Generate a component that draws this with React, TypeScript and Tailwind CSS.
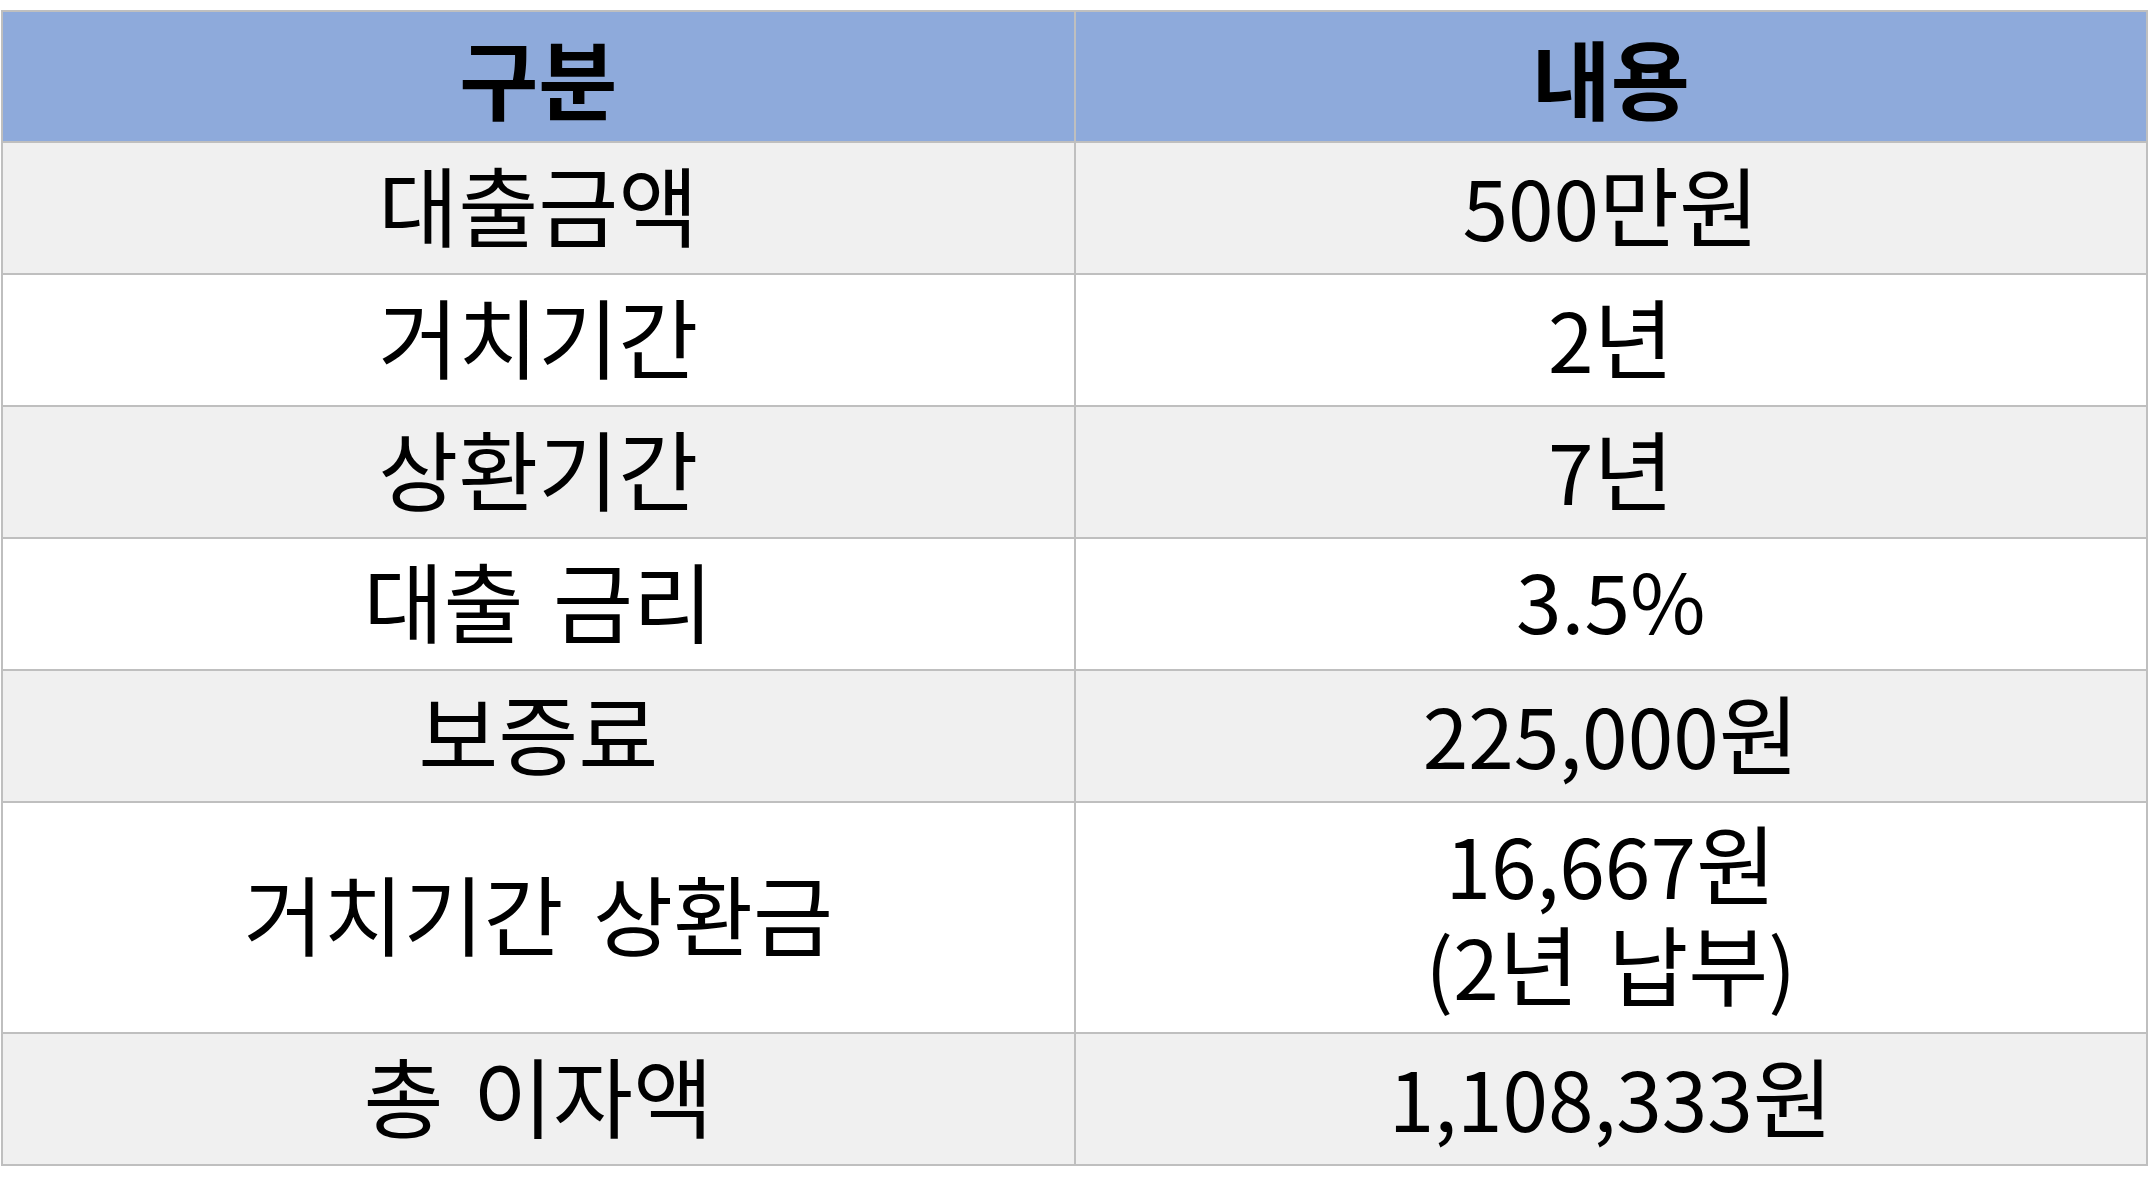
import React from "react";

const K = ({ children }: { children: React.ReactNode }) => (
  <span className="text-[87px]">{children}</span>
);

const rows: { k: string; v: React.ReactNode; tall?: boolean }[] = [
  { k: "대출금액", v: <>500<K>만원</K></> },
  { k: "거치기간", v: <>2<K>년</K></> },
  { k: "상환기간", v: <>7<K>년</K></> },
  { k: "대출 금리", v: "3.5%" },
  { k: "보증료", v: <>225,000<K>원</K></> },
  {
    k: "거치기간 상환금",
    v: (
      <>
        <div className="leading-[99px]">16,667<K>원</K></div>
        <div className="leading-[99px]">(2<K>년 납부</K>)</div>
      </>
    ),
    tall: true,
  },
  { k: "총 이자액", v: <>1,108,333<K>원</K></> },
];

export default function App() {
  return (
    <div
      className="w-[2150px] h-[1199px] bg-white pt-[10px] pl-[1px]"
      style={{ fontFamily: '"Noto Sans CJK KR", "Noto Sans", sans-serif' }}
    >
      <table className="w-[2147px] border-collapse table-fixed text-black text-[82px] leading-[1.2] [word-spacing:0.12em]">
        <thead>
          <tr className="h-[131px] bg-[#8eaadb]">
            <th className="border-2 border-[#bfbfbf] font-bold text-center align-middle text-[86px]">구분</th>
            <th className="border-2 border-[#bfbfbf] font-bold text-center align-middle text-[86px]">내용</th>
          </tr>
        </thead>
        <tbody>
          {rows.map((r, i) => (
            <tr
              key={i}
              className={
                (r.tall ? "h-[231px] " : "h-[132px] ") +
                (i % 2 === 0 ? "bg-[#f0f0f0]" : "bg-white")
              }
            >
              <td className="border-2 border-[#bfbfbf] text-center align-middle px-0 pt-0 pb-[10px] text-[87px]">{r.k}</td>
              <td className="border-2 border-[#bfbfbf] text-center align-middle px-0 pt-0 pb-[10px]">{r.v}</td>
            </tr>
          ))}
        </tbody>
      </table>
    </div>
  );
}
